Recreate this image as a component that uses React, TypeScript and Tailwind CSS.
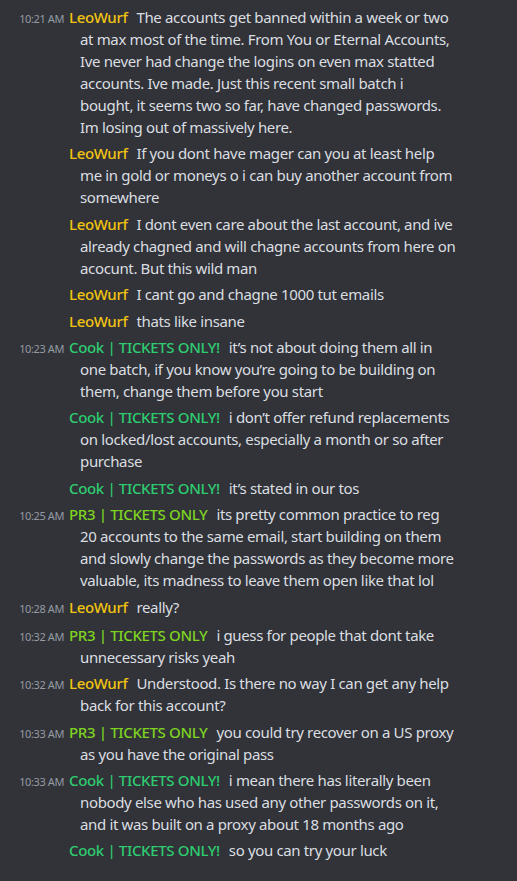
type Author = "leo" | "cook" | "pr3";

const names: Record<Author, string> = {
  leo: "LeoWurf",
  cook: "Cook | TICKETS ONLY!",
  pr3: "PR3 | TICKETS ONLY",
};

const nameColors: Record<Author, string> = {
  leo: "text-[#f1c40f]",
  cook: "text-[#2ecc71]",
  pr3: "text-[#7ed321]",
};

const messages: { time?: string; author: Author; text: string }[] = [
  {
    time: "10:21 AM",
    author: "leo",
    text: "The accounts get banned within a week or two at max most of the time. From You or Eternal Accounts, Ive never had change the logins on even max statted accounts. Ive made. Just this recent small batch i bought, it seems two so far, have changed passwords. Im losing out of massively here.",
  },
  {
    author: "leo",
    text: "If you dont have mager can you at least help me in gold or moneys o i can buy another account from somewhere",
  },
  {
    author: "leo",
    text: "I dont even care about the last account, and ive already chagned and will chagne accounts from here on acocunt. But this wild man",
  },
  { author: "leo", text: "I cant go and chagne 1000 tut emails" },
  { author: "leo", text: "thats like insane" },
  {
    time: "10:23 AM",
    author: "cook",
    text: "it\u2019s not about doing them all in one batch, if you know you\u2019re going to be building on them, change them before you start",
  },
  {
    author: "cook",
    text: "i don\u2019t offer refund replacements on locked/lost accounts, especially a month or so after purchase",
  },
  { author: "cook", text: "it\u2019s stated in our tos" },
  {
    time: "10:25 AM",
    author: "pr3",
    text: "its pretty common practice to reg 20 accounts to the same email, start building on them and slowly change the passwords as they become more valuable, its madness to leave them open like that lol",
  },
  { time: "10:28 AM", author: "leo", text: "really?" },
  {
    time: "10:32 AM",
    author: "pr3",
    text: "i guess for people that dont take unnecessary risks yeah",
  },
  {
    time: "10:32 AM",
    author: "leo",
    text: "Understood. Is there no way I can get any help back for this account?",
  },
  {
    time: "10:33 AM",
    author: "pr3",
    text: "you could try recover on a US proxy as you have the original pass",
  },
  {
    time: "10:33 AM",
    author: "cook",
    text: "i mean there has literally been nobody else who has used any other passwords on it, and it was built on a proxy about 18 months ago",
  },
  { author: "cook", text: "so you can try your luck" },
];

const App = () => {
  return (
    <div
      className="min-h-[881px] w-[517px] bg-[#313338] pt-[6px] flex flex-col gap-[4.4px]"
      style={{ fontFamily: '"Noto Sans", sans-serif' }}
    >
      {messages.map((m, i) => (
        <div key={i} className="flex items-baseline">
          <div className="w-[65px] shrink-0 pr-[1px] text-right text-[11px] leading-[22px] text-[#949ba4] tracking-[-0.4px]">
            {m.time}
          </div>
          <div className="ml-[4px] w-[388px] pl-[11px] -indent-[11px] text-[15px] leading-[22px] tracking-[-0.35px] text-[#dbdee1]">
            <span className={`font-medium mr-[9px] ${nameColors[m.author]}`}>
              {names[m.author]}
            </span>
            {m.text}
          </div>
        </div>
      ))}
    </div>
  );
};

export default App;
